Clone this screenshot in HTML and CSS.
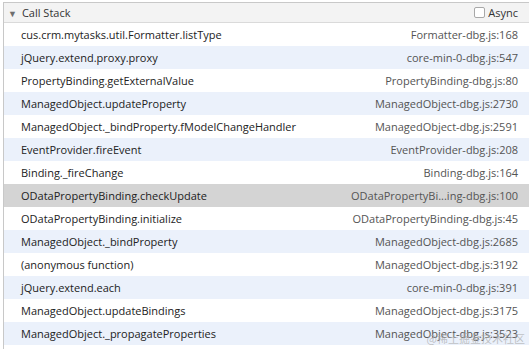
FILE: index.html
```html
<!DOCTYPE html>
<html lang="en">
<head>
    <meta charset="UTF-8">
    <title>Call Stack</title>
    <link rel="stylesheet" href="styles.css">
</head>
<body>
    <div class="panel">
        <div class="header">
            <div class="title"><span class="arrow">&#9660;</span>Call Stack</div>
            <label class="async"><span class="box"></span>Async</label>
        </div>
        <div class="frames">
            <div class="frame"><span class="fn">cus.crm.mytasks.util.Formatter.listType</span><span class="loc">Formatter-dbg.js:168</span></div>
            <div class="frame alt"><span class="fn">jQuery.extend.proxy.proxy</span><span class="loc">core-min-0-dbg.js:547</span></div>
            <div class="frame"><span class="fn">PropertyBinding.getExternalValue</span><span class="loc">PropertyBinding-dbg.js:80</span></div>
            <div class="frame alt"><span class="fn">ManagedObject.updateProperty</span><span class="loc">ManagedObject-dbg.js:2730</span></div>
            <div class="frame"><span class="fn">ManagedObject._bindProperty.fModelChangeHandler</span><span class="loc">ManagedObject-dbg.js:2591</span></div>
            <div class="frame alt"><span class="fn">EventProvider.fireEvent</span><span class="loc">EventProvider-dbg.js:208</span></div>
            <div class="frame"><span class="fn">Binding._fireChange</span><span class="loc">Binding-dbg.js:164</span></div>
            <div class="frame selected"><span class="fn">ODataPropertyBinding.checkUpdate</span><span class="loc">ODataPropertyBi...ing-dbg.js:100</span></div>
            <div class="frame"><span class="fn">ODataPropertyBinding.initialize</span><span class="loc">ODataPropertyBinding-dbg.js:45</span></div>
            <div class="frame alt"><span class="fn">ManagedObject._bindProperty</span><span class="loc">ManagedObject-dbg.js:2685</span></div>
            <div class="frame"><span class="fn">(anonymous function)</span><span class="loc">ManagedObject-dbg.js:3192</span></div>
            <div class="frame alt"><span class="fn">jQuery.extend.each</span><span class="loc">core-min-0-dbg.js:391</span></div>
            <div class="frame"><span class="fn">ManagedObject.updateBindings</span><span class="loc">ManagedObject-dbg.js:3175</span></div>
            <div class="frame alt"><span class="fn">ManagedObject._propagateProperties</span><span class="loc">ManagedObject-dbg.js:3523</span></div>
        </div>
    </div>
    <div class="watermark">@稀土掘金技术社区</div>
</body>
</html>
```

FILE: styles.css
```css
* {
    margin: 0;
    padding: 0;
    box-sizing: border-box;
}

body {
    background-color: #ffffff;
    color: #222222;
    font-family: 'Open Sans', 'Noto Sans', sans-serif;
    font-size: 11px;
    width: 529px;
    height: 349px;
    overflow: hidden;
    position: relative;
    padding-top: 2px;
}

.panel {
    margin-left: 3px;
    border-left: 1px solid #c8c8c8;
    border-top: 1px solid #c8c8c8;
    height: 347px;
}

.header {
    height: 20px;
    background-color: #f3f3f3;
    border-bottom: 1px solid #dadada;
    display: flex;
    justify-content: space-between;
    align-items: center;
    padding: 0 11px 0 4px;
    color: #333333;
}

.arrow {
    display: inline-block;
    font-size: 9px;
    color: #6e6e6e;
    margin-right: 5px;
}

.async {
    display: flex;
    align-items: center;
    gap: 3px;
}

.box {
    width: 11px;
    height: 11px;
    border: 1px solid #a8a8a8;
    border-radius: 2px;
    background-color: #ffffff;
}

.frame {
    height: 23px;
    display: flex;
    justify-content: space-between;
    align-items: center;
    padding: 0 11px 1px 17px;
    white-space: nowrap;
}

.frame.alt {
    background-color: #ebf1fb;
}

.frame.selected {
    background-color: #d4d4d4;
}

.fn {
    color: #222222;
}

.loc {
    color: #545454;
}

.watermark {
    position: absolute;
    right: 4px;
    bottom: 3px;
    font-family: 'Noto Sans CJK SC', sans-serif;
    font-size: 11px;
    color: rgba(170, 170, 170, 0.7);
}
```
